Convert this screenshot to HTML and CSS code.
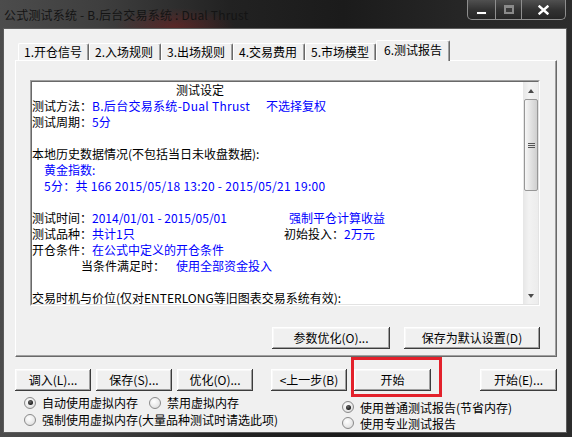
FILE: index.html
```html
<!DOCTYPE html>
<html lang="zh-CN">
<head>
<meta charset="utf-8">
<title>公式测试系统</title>
<link rel="stylesheet" href="styles.css">
</head>
<body>
<div class="window">
  <div class="titlebar">
    <div class="title">公式测试系统 - B.后台交易系统 : Dual Thrust</div>
    <div class="caption">
      <div class="cbtn min"><span class="min-glyph"></span></div>
      <div class="cbtn max"><span class="max-glyph"></span></div>
      <div class="cbtn close">
        <svg width="11" height="10" viewBox="0 0 11 10"><path d="M1.5 1.5 L9.5 8.5 M9.5 1.5 L1.5 8.5" stroke="#fff" stroke-width="2.4" stroke-linecap="square"/></svg>
      </div>
    </div>
  </div>
  <div class="client">
    <div class="tabs">
      <div class="tab w71">1.开仓信号</div>
      <div class="tab w72">2.入场规则</div>
      <div class="tab w72">3.出场规则</div>
      <div class="tab w72">4.交易费用</div>
      <div class="tab w71">5.市场模型</div>
      <div class="tab active">6.测试报告</div>
    </div>
    <div class="panel">
      <div class="report">
        <div class="report-inner">
          <div class="report-text">
            <div class="ln title-ln">测试设定</div>
            <div class="ln"><span class="col c234">测试方法：<span class="b ls">B.后台交易系统-Dual Thrust</span></span><span class="b">不选择复权</span></div>
            <div class="ln">测试周期：<span class="b">5分</span></div>
            <div class="ln"></div>
            <div class="ln">本地历史数据情况(不包括当日未收盘数据):</div>
            <div class="ln ind12 b">黄金指数:</div>
            <div class="ln ind12 b ls">5分：共 166 2015/05/18 13:20 - 2015/05/21 19:00</div>
            <div class="ln"></div>
            <div class="ln"><span class="col c257">测试时间：<span class="b">2014/01/01 - 2015/05/01</span></span><span class="b">强制平仓计算收益</span></div>
            <div class="ln"><span class="col c252">测试品种：<span class="b">共计1只</span></span>初始投入：<span class="b">2万元</span></div>
            <div class="ln">开仓条件：<span class="b">在公式中定义的开仓条件</span></div>
            <div class="ln ind49"><span class="col c95">当条件满足时：</span><span class="b">使用全部资金投入</span></div>
            <div class="ln"></div>
            <div class="ln">交易时机与价位(仅对ENTERLONG等旧图表交易系统有效):</div>
          </div>
          <div class="vscroll">
            <div class="sb-arrow"><span class="tri up"></span></div>
            <div class="sb-track">
              <div class="sb-thumb"><span class="grip"></span></div>
            </div>
            <div class="sb-arrow"><span class="tri down"></span></div>
          </div>
        </div>
      </div>
      <div class="panel-btns">
        <button class="btn w118">参数优化(O)...</button>
        <button class="btn w136">保存为默认设置(D)</button>
      </div>
    </div>
    <div class="bottom-btns">
      <button class="btn w76">调入(L)...</button>
      <button class="btn w76 g5">保存(S)...</button>
      <button class="btn w76 g5">优化(O)...</button>
      <button class="btn w76 g18">&lt;上一步(B)</button>
      <button class="btn w77 g7">开始</button>
      <button class="btn w77 g49">开始(E)...</button>
    </div>
    <div class="options">
      <div class="opt-left">
        <div class="opt-row h17">
          <label class="radio w125"><span class="rb on"></span>自动使用虚拟内存</label>
          <label class="radio"><span class="rb"></span>禁用虚拟内存</label>
        </div>
        <div class="opt-row h17">
          <label class="radio"><span class="rb"></span>强制使用虚拟内存(大量品种测试时请选此项)</label>
        </div>
      </div>
      <div class="opt-right">
        <div class="opt-row h16">
          <label class="radio"><span class="rb on"></span>使用普通测试报告(节省内存)</label>
        </div>
        <div class="opt-row h16">
          <label class="radio"><span class="rb"></span>使用专业测试报告</label>
        </div>
      </div>
    </div>
    <div class="highlight"></div>
  </div>
</div>
</body>
</html>
```

FILE: styles.css
```css
* { box-sizing: border-box; }
html, body { margin: 0; padding: 0; }
body {
  width: 572px;
  height: 437px;
  overflow: hidden;
  background: #1f1f1f;
  font-family: "Noto Sans CJK SC", "Noto Sans", sans-serif;
  font-size: 12px;
  color: #000;
}
.window {
  width: 572px;
  height: 437px;
  display: flex;
  flex-direction: column;
  background:
    radial-gradient(ellipse 60px 18px at 175px 26px, rgba(140, 30, 30, 0.45), rgba(0, 0, 0, 0)),
    linear-gradient(to right, #4c4c4c 0%, #3e3e3e 18%, #222 40%, #1b1b1b 60%, #262626 80%, #2c2c2c 100%);
}
.titlebar {
  height: 28px;
  flex: none;
  display: flex;
  justify-content: space-between;
  align-items: flex-start;
  padding-left: 4px;
}
.title {
  margin-top: 7px;
  font-size: 12px;
  letter-spacing: 0.2px;
  line-height: 16px;
  color: #141414;
  white-space: nowrap;
}
.caption {
  display: flex;
  margin-right: 6px;
  height: 20px;
  border: 1px solid #8e8e8e;
  border-top: none;
  border-radius: 0 0 5px 5px;
  overflow: hidden;
  background: linear-gradient(#505050, #333 50%, #262626);
}
.cbtn {
  height: 19px;
  display: flex;
  align-items: center;
  justify-content: center;
}
.cbtn + .cbtn { border-left: 1px solid #8e8e8e; }
.cbtn.min { width: 27px; }
.cbtn.max { width: 26px; }
.cbtn.close { width: 44px; }
.min-glyph {
  width: 11px;
  height: 4px;
  margin-top: 6px;
  background: #fff;
  border: 1px solid #333;
}
.max-glyph {
  width: 10px;
  height: 9px;
  border: 2px solid #8a8a8a;
  border-top-width: 3px;
  background: #3a3a3a;
}
.client {
  flex: 1;
  margin: 0 5px 4px 3px;
  border: 1px solid #5c5c5c;
  background: #f0f0f0;
  position: relative;
}
/* tabs */
.tabs {
  display: flex;
  align-items: flex-end;
  height: 31px;
  padding-left: 14px;
  position: relative;
  z-index: 2;
}
.tab {
  height: 17px;
  line-height: 15px;
  padding-left: 5px;
  white-space: nowrap;
  background: #f0f0f0;
  border-top: 1px solid #fff;
  border-left: 1px solid #fff;
  border-right: 1px solid #696969;
  box-shadow: inset -1px 0 #a0a0a0;
  border-radius: 2px 2px 0 0;
}
.tab.w71 { width: 71px; }
.tab.w72 { width: 72px; }
.tab.active {
  width: 74px;
  height: 21px;
  margin-bottom: -1px;
  line-height: 17px;
  padding-left: 7px;
}
.panel {
  margin-left: 11px;
  width: 542px;
  height: 297px;
  border-top: 1px solid #fff;
  border-left: 1px solid #fff;
  border-right: 1px solid #696969;
  border-bottom: 1px solid #696969;
  box-shadow: inset -1px -1px #a0a0a0;
  padding: 19px 0 0 14px;
  position: relative;
  z-index: 1;
}
.report {
  width: 510px;
  height: 226px;
  border: 1px solid;
  border-color: #a0a0a0 #fff #fff #a0a0a0;
}
.report-inner {
  height: 100%;
  border: 1px solid;
  border-color: #696969 #e3e3e3 #e3e3e3 #696969;
  background: #fff;
  display: flex;
}
.report-text {
  flex: 1;
  line-height: 16px;
  white-space: nowrap;
}
.ln { height: 16px; }
.ln:last-child { height: 15px; line-height: 15px; }
.title-ln { padding-left: 144px; }
.ind12 { padding-left: 12px; }
.ind49 { padding-left: 49px; }
.b { color: #0000ff; }
.ls { letter-spacing: 0.3px; }
.col { display: inline-block; }
.c234 { width: 234px; }
.c257 { width: 257px; }
.c252 { width: 252px; }
.c95 { width: 95px; }
/* scrollbar */
.vscroll {
  width: 15px;
  flex: none;
  display: flex;
  flex-direction: column;
  background: linear-gradient(to right, #e6e6e6, #f2f2f2 40%, #ececec);
}
.sb-arrow {
  height: 17px;
  display: flex;
  align-items: center;
  justify-content: center;
}
.tri {
  width: 0;
  height: 0;
  border-left: 3.5px solid transparent;
  border-right: 3.5px solid transparent;
}
.tri.up { border-bottom: 4px solid #4a4a4a; }
.tri.down { border-top: 4px solid #4a4a4a; }
.sb-track { flex: 1; }
.sb-thumb {
  height: 92px;
  margin: 0 0 0 1px;
  width: 14px;
  border: 1px solid #979797;
  border-radius: 2px;
  background: linear-gradient(to right, #f6f6f6, #e4e4e4 45%, #cfcfcf);
  display: flex;
  align-items: center;
  justify-content: center;
}
.grip {
  width: 7px;
  height: 5px;
  border-top: 1px solid #555;
  border-bottom: 1px solid #555;
  position: relative;
}
.grip::after {
  content: "";
  position: absolute;
  left: 0;
  right: 0;
  top: 1px;
  height: 1px;
  background: #555;
}
.panel-btns {
  width: 510px;
  margin-top: 21px;
  display: flex;
  justify-content: flex-end;
  gap: 14px;
}
/* classic buttons */
.btn {
  height: 22px;
  padding: 0;
  border: none;
  background: #f0f0f0;
  font-family: "Noto Sans CJK SC", "Noto Sans", sans-serif;
  font-size: 12px;
  color: #000;
  line-height: 20px;
  white-space: nowrap;
  box-shadow: inset -1px -1px #3c3c3c, inset 1px 1px #fff, inset -2px -2px #a0a0a0, inset 2px 2px #f8f8f8;
}
.w118 { width: 118px; }
.w136 { width: 136px; }
.w76 { width: 76px; }
.w77 { width: 77px; }
.g5 { margin-left: 5px; }
.g7 { margin-left: 7px; }
.g18 { margin-left: 18px; }
.g49 { margin-left: 49px; }
.bottom-btns {
  display: flex;
  margin-top: 12px;
  padding-left: 11px;
}
.options {
  display: flex;
  margin-top: 3px;
  padding-left: 20px;
}
.opt-left { width: 318px; }
.opt-right { padding-top: 5px; }
.opt-row { display: flex; align-items: center; white-space: nowrap; }
.h17 { height: 17px; }
.h16 { height: 16px; }
.radio {
  display: inline-flex;
  align-items: center;
  gap: 6px;
}
.radio.w125 { width: 125px; }
.rb {
  width: 12px;
  height: 12px;
  border-radius: 50%;
  border: 1px solid #8a8a8a;
  background: radial-gradient(circle at 40% 35%, #ffffff 0%, #eaeaea 55%, #d2d2d2 100%);
  display: flex;
  align-items: center;
  justify-content: center;
}
.rb.on::after {
  content: "";
  width: 5px;
  height: 5px;
  border-radius: 50%;
  background: radial-gradient(circle at 40% 35%, #6a6a6a, #1a1a1a 70%);
}
.highlight {
  position: absolute;
  left: 347px;
  top: 328px;
  width: 91px;
  height: 40px;
  border: 3px solid #e3212b;
  z-index: 3;
}
```
